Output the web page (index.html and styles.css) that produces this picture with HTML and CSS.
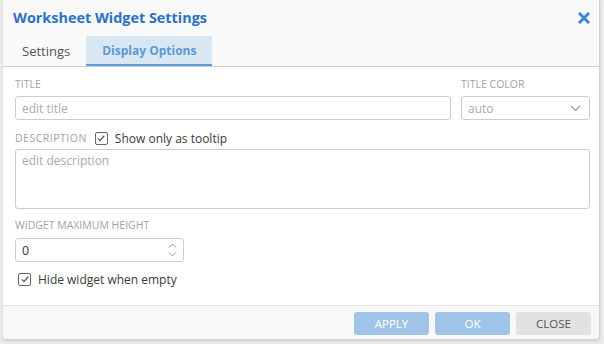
FILE: index.html
```html
<!DOCTYPE html>
<html>
<head>
<meta charset="utf-8">
<link rel="stylesheet" href="styles.css">
</head>
<body>
<div class="dialog">
  <div class="header">
    <div class="title-row">
      <span class="title">Worksheet Widget Settings</span>
      <svg class="close" width="12" height="12" viewBox="0 0 12 12"><path d="M2 2L10 10M10 2L2 10" stroke="#3b86d6" stroke-width="3" stroke-linecap="square"/></svg>
    </div>
    <div class="tabs">
      <div class="tab">Settings</div>
      <div class="tab active">Display Options</div>
    </div>
  </div>
  <div class="body">
    <div class="row">
      <div class="field grow">
        <div class="label">TITLE</div>
        <div class="input"><span class="ph">edit title</span></div>
      </div>
      <div class="field color">
        <div class="label">TITLE COLOR</div>
        <div class="input select"><span class="ph">auto</span>
          <svg width="11" height="7" viewBox="0 0 11 7"><path d="M1 1L5.5 5.5L10 1" fill="none" stroke="#999" stroke-width="1.2"/></svg>
        </div>
      </div>
    </div>
    <div class="desc-row">
      <span class="label inline">DESCRIPTION</span>
      <span class="check"><svg width="8" height="7" viewBox="0 0 8 7"><path d="M0.8 3.4L3 5.6L7.2 0.8" fill="none" stroke="#555" stroke-width="1.3"/></svg></span>
      <span class="check-text">Show only as tooltip</span>
    </div>
    <div class="textarea"><span class="ph">edit description</span></div>
    <div class="label mt">WIDGET MAXIMUM HEIGHT</div>
    <div class="input number"><span class="val">0</span>
      <svg width="9" height="16" viewBox="0 0 9 16"><path d="M1 5.5L4.5 2L8 5.5M1 10.5L4.5 14L8 10.5" fill="none" stroke="#999" stroke-width="1"/></svg>
    </div>
    <div class="hide-row">
      <span class="check"><svg width="8" height="7" viewBox="0 0 8 7"><path d="M0.8 3.4L3 5.6L7.2 0.8" fill="none" stroke="#555" stroke-width="1.3"/></svg></span>
      <span class="check-text">Hide widget when empty</span>
    </div>
  </div>
  <div class="footer">
    <div class="btn primary">APPLY</div>
    <div class="btn primary">OK</div>
    <div class="btn secondary">CLOSE</div>
  </div>
</div>
</body>
</html>
```

FILE: styles.css
```css
* { box-sizing: border-box; }
html, body { margin: 0; padding: 0; }
body {
  background: #ececec;
  font-family: "Open Sans", "Noto Sans", sans-serif;
  width: 604px;
  height: 344px;
  overflow: hidden;
}
.dialog {
  margin-left: 3px;
  width: 597px;
  height: 340px;
  background: #fff;
  border-right: 1px solid #d0d0d0;
  border-bottom: 1px solid #d0d0d0;
  border-radius: 0 0 4px 4px;
  box-shadow: 0 1px 3px rgba(0,0,0,0.15);
  display: flex;
  flex-direction: column;
}
.header {
  background: #f9f9f9;
  border-bottom: 1px solid #cfcfcf;
  padding: 7px 9px 0 3px;
  height: 67px;
}
.title-row {
  display: flex;
  justify-content: space-between;
  align-items: center;
  padding-left: 7px;
  height: 20px;
}
.title {
  font-weight: 700;
  font-size: 14.4px;
  color: #2b72c4;
}
.close { margin-top: 2px; }
.tabs {
  display: flex;
  margin-top: 9px;
  height: 30px;
}
.tab {
  padding: 0 16px;
  font-size: 13px;
  color: #555;
  display: flex;
  align-items: center;
  height: 30px;
}
.tab.active {
  background: #d9e7f3;
  color: #5c9ad6;
  font-weight: 700;
  font-size: 12px;
  border-bottom: 2px solid #5c9ad6;
}
.body {
  flex: 1;
  padding: 10px 9px 0 12px;
}
.row { display: flex; gap: 10px; }
.field.grow { flex: 1; }
.field.color { width: 129px; }
.label {
  font-size: 10.5px;
  line-height: 14px;
  color: #a3a3a3;
  margin-bottom: 5px;
}
.label.inline { margin: 0 8px 0 0; letter-spacing: 0.5px; }
.label.mt { margin-top: 9px; margin-bottom: 6px; }
.input {
  height: 24px;
  border: 1px solid #cdcdcd;
  border-radius: 3px;
  display: flex;
  align-items: center;
  padding: 0 6px;
  font-size: 12px;
}
.ph { color: #aaa; }
.val { color: #333; font-size: 12.5px; }
.select { justify-content: space-between; padding-right: 8px; }
.desc-row {
  display: flex;
  align-items: center;
  height: 18px;
  margin-top: 9px;
}
.check {
  width: 13px;
  height: 13px;
  border: 1.5px solid #666;
  border-radius: 2px;
  display: inline-flex;
  align-items: center;
  justify-content: center;
}
.check-text {
  font-size: 12px;
  color: #3a3a3a;
  margin-left: 7px;
}
.textarea {
  margin-top: 2px;
  height: 60px;
  border: 1px solid #cdcdcd;
  border-radius: 3px;
  padding: 2px 6px;
  font-size: 12px;
}
.number {
  width: 169px;
  justify-content: space-between;
  padding-right: 6px;
}
.hide-row {
  display: flex;
  align-items: center;
  height: 18px;
  margin-top: 8px;
  padding-left: 3px;
}
.footer {
  height: 34px;
  background: #f8f8f8;
  border-top: 1px solid #e2e2e2;
  display: flex;
  justify-content: flex-end;
  align-items: flex-start;
  padding: 6px 8px 0 0;
  gap: 6px;
  border-radius: 0 0 4px 4px;
}
.btn {
  width: 75px;
  height: 23px;
  border-radius: 3px;
  font-size: 11.5px;
  display: flex;
  align-items: center;
  justify-content: center;
}
.primary { background: #a0c4e8; color: #fff; }
.secondary { background: #e2e2e2; color: #555; }
```
